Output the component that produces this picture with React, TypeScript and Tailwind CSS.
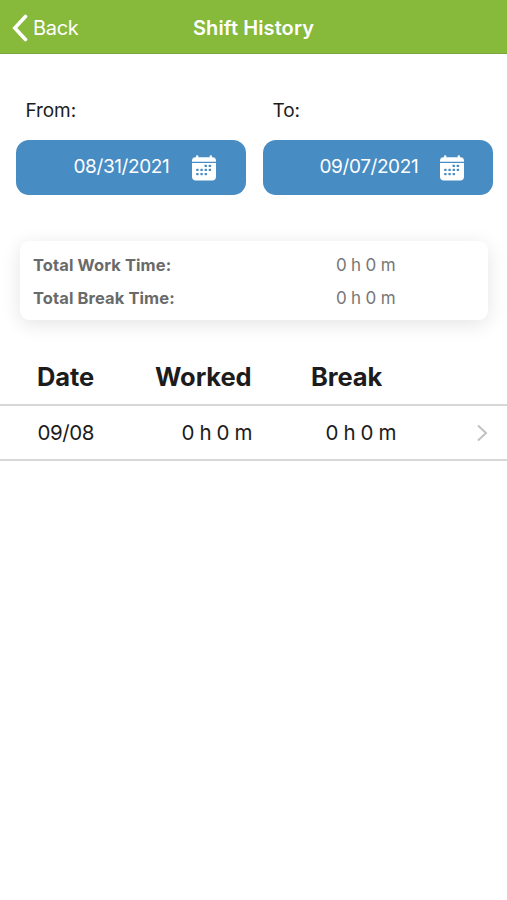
type DateButtonProps = {
  label: string;
  value: string;
  buttonClass: string;
  valueClass: string;
};

function CalendarIcon() {
  const dots = [
    [13.8, 10.8], [17.9, 10.8],
    [5.4, 14.9], [9.6, 14.9], [13.8, 14.9], [17.9, 14.9],
    [5.4, 19], [9.6, 19], [13.8, 19],
  ];
  return (
    <svg viewBox="0 0 24 26" className="h-[26px] w-6 shrink-0" fill="none">
      <path
        d="M0 6.800V5.600C0 3.400 1.400 2.200 3.500 2.200H4V1.500a1.200 1.200 0 0 1 2.400 0v.7h11.200v-.7a1.200 1.200 0 0 1 2.400 0v.7h.5C22.600 2.200 24 3.400 24 5.600v1.200z"
        fill="#fff"
      />
      <path d="M0 8.100h24v13.400c0 2.500-1.400 3.900-3.800 3.900H3.800C1.400 25.400 0 24 0 21.500z" fill="#fff" />
      {dots.map(([x, y]) => (
        <rect key={`${x}-${y}`} x={x - 1.2} y={y - 1.1} width="2.4" height="2.3" rx="0.6" fill="#478cc3" />
      ))}
    </svg>
  );
}

function DateButton({ label, value, buttonClass, valueClass }: DateButtonProps) {
  return (
    <div className="w-[230px]">
      <div className="h-[42px] pl-[10px] text-[19px] leading-[26px] tracking-[-0.1px] text-[#1c1c1c]">{label}</div>
      <button
        className={`flex h-[55px] w-full items-center rounded-[13px] bg-[#478cc3] text-[19px] tracking-[-0.4px] text-white ${buttonClass}`}
      >
        <span className={`whitespace-nowrap text-left ${valueClass}`}>{value}</span>
        <CalendarIcon />
      </button>
    </div>
  );
}

function TotalRow({ label, value }: { label: string; value: string }) {
  return (
    <div className="flex h-[33px] items-center">
      <span className="w-[303px] text-[16.500px] font-bold tracking-[0.1px] text-[#6a6a6a]">{label}</span>
      <span className="text-[17px] tracking-[-0.2px] text-[#777]">{value}</span>
    </div>
  );
}

export default function App() {
  return (
    <div className="min-h-[900px] w-full bg-white font-['Inter',sans-serif] text-[#1c1c1c]">
      <header className="grid h-[54px] grid-cols-[193px_1fr] items-center border-b border-[#7ca63c] bg-[#87b93a] text-white">
        <button className="flex items-center pl-3 pt-[2px] text-[20px] leading-6">
          <svg viewBox="0 0 16 28" className="mr-[5px] h-7 w-4" fill="none">
            <path d="M13.500 2.500 2.800 14l10.700 11.500" stroke="#fff" strokeWidth="3.600" strokeLinecap="round" strokeLinejoin="miter" />
          </svg>
          <span className="tracking-[-0.3px]">Back</span>
        </button>
        <h1 className="whitespace-nowrap pt-[2px] text-[20px] font-semibold tracking-[0.1px]">Shift History</h1>
      </header>

      <section className="flex gap-[17px] pl-[15.500px] pt-11">
        <DateButton label="From:" value="08/31/2021" buttonClass="pl-[58px]" valueClass="w-[118px]" />
        <DateButton label="To:" value="09/07/2021" buttonClass="pl-[57px]" valueClass="w-[120px]" />
      </section>

      <section className="ml-5 mt-[46px] h-[79px] w-[468px] rounded-[9px] bg-white pl-[13px] pt-2 shadow-[0_4px_20px_rgba(0,0,0,0.11)]">
        <TotalRow label="Total Work Time:" value="0 h 0 m" />
        <TotalRow label="Total Break Time:" value="0 h 0 m" />
      </section>

      <section className="mt-[28px]">
        <div className="grid h-[58px] grid-cols-[118px_156px_1fr] items-center border-b-2 border-[#d7d7d7] pl-[37px] pt-[3px] text-[25.500px] font-bold tracking-[-0.1px]">
          <span>Date</span>
          <span>Worked</span>
          <span>Break</span>
        </div>
        <div className="grid h-[55px] grid-cols-[144px_144px_1fr_auto] items-center border-b-2 border-[#d7d7d7] pl-[37.500px] pr-[19px] pt-px text-[20.500px] tracking-[-0.4px]">
          <span>09/08</span>
          <span>0 h 0 m</span>
          <span>0 h 0 m</span>
          <svg viewBox="0 0 12 18" className="h-[18px] w-3" fill="none">
            <path d="m2 1.500 8 7.500-8 7.500" stroke="#c2c2c2" strokeWidth="2" />
          </svg>
        </div>
      </section>
    </div>
  );
}
